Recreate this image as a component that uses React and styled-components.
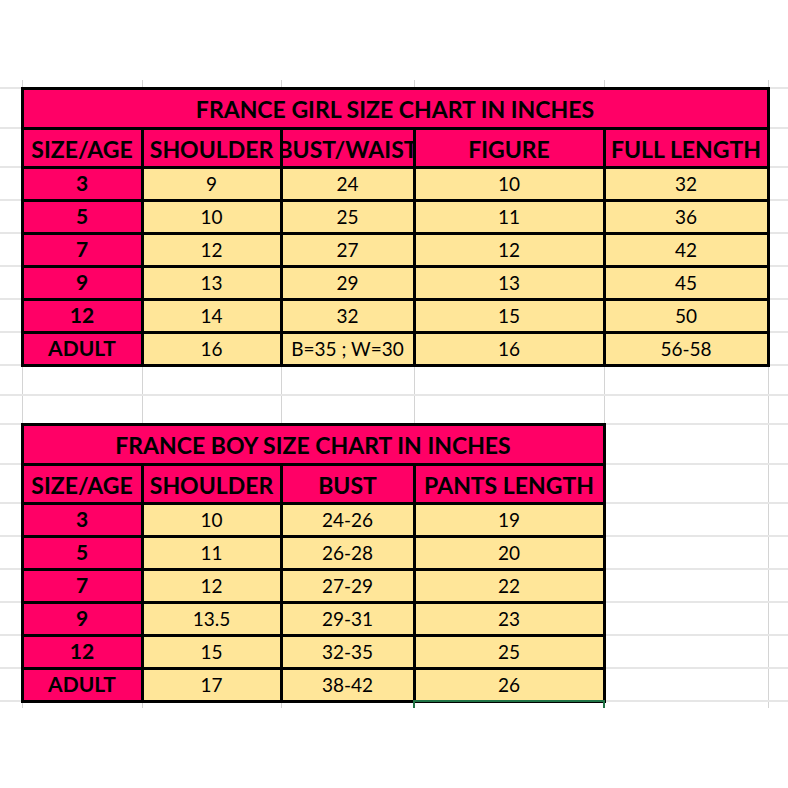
import React from 'react';
import styled, { createGlobalStyle } from 'styled-components';

const COLS = [22, 120, 139, 133, 190, 164, 20];

const girlRows = [
  ['3', '9', '24', '10', '32'],
  ['5', '10', '25', '11', '36'],
  ['7', '12', '27', '12', '42'],
  ['9', '13', '29', '13', '45'],
  ['12', '14', '32', '15', '50'],
  ['ADULT', '16', 'B=35 ; W=30', '16', '56-58'],
];

const boyRows = [
  ['3', '10', '24-26', '19'],
  ['5', '11', '26-28', '20'],
  ['7', '12', '27-29', '22'],
  ['9', '13.5', '29-31', '23'],
  ['12', '15', '32-35', '25'],
  ['ADULT', '17', '38-42', '26'],
];

const kinds = {
  title: { bg: '#ff0066', size: 23, weight: 700, shift: 3 },
  head: { bg: '#ff0066', size: 23, weight: 700, shift: 3 },
  label: { bg: '#ff0066', size: 21, weight: 700, shift: 0 },
  value: { bg: '#ffe699', size: 19, weight: 400, shift: 0 },
};

const Cell = ({ kind = 'value', span, children }) => (
  <TableCell $kind={kind} colSpan={span}>
    <Fit>{children}</Fit>
  </TableCell>
);

const Blanks = ({ count, last }) =>
  Array.from({ length: count }, (_, i) => <Blank key={'b' + i} $last={last} />);

const App = () => {
  return (
    <>
      <GlobalStyle />
      <Sheet>
        <colgroup>
          {COLS.map((w, i) => (
            <col key={i} style={{ width: w }} />
          ))}
        </colgroup>
        <tbody>
          <Row $h={8}>
            <Blanks count={7} />
          </Row>

          {/* girl chart */}
          <Row $h={40}>
            <Blank />
            <Cell kind="title" span={5}>FRANCE GIRL SIZE CHART IN INCHES</Cell>
            <Blank />
          </Row>
          <Row $h={39}>
            <Blank />
            <Cell kind="head">SIZE/AGE</Cell>
            <Cell kind="head">SHOULDER</Cell>
            <Cell kind="head">BUST/WAIST</Cell>
            <Cell kind="head">FIGURE</Cell>
            <Cell kind="head">FULL LENGTH</Cell>
            <Blank />
          </Row>
          {girlRows.map((r) => (
            <Row $h={33} key={'g' + r[0]}>
              <Blank />
              <Cell kind="label">{r[0]}</Cell>
              {r.slice(1).map((v, i) => (
                <Cell key={i}>{v}</Cell>
              ))}
              <Blank />
            </Row>
          ))}

          <Row $h={30}>
            <Blanks count={7} />
          </Row>
          <Row $h={29}>
            <Blanks count={7} />
          </Row>

          {/* boy chart */}
          <Row $h={40}>
            <Blank />
            <Cell kind="title" span={4}>FRANCE BOY SIZE CHART IN INCHES</Cell>
            <Blanks count={2} />
          </Row>
          <Row $h={39}>
            <Blank />
            <Cell kind="head">SIZE/AGE</Cell>
            <Cell kind="head">SHOULDER</Cell>
            <Cell kind="head">BUST</Cell>
            <Cell kind="head">PANTS LENGTH</Cell>
            <Blanks count={2} />
          </Row>
          {boyRows.map((r) => (
            <Row $h={33} key={'b' + r[0]}>
              <Blank />
              <Cell kind="label">{r[0]}</Cell>
              {r.slice(1).map((v, i) => (
                <Cell key={i}>{v}</Cell>
              ))}
              <Blanks count={2} />
            </Row>
          ))}

          <Row $h={7}>
            <Blanks count={4} last />
            <Blank $last>
              <Selection />
            </Blank>
            <Blanks count={2} last />
          </Row>
        </tbody>
      </Sheet>
    </>
  );
};

const GlobalStyle = createGlobalStyle`
  html, body {
    margin: 0;
    background: #fff;
  }
`;

const Sheet = styled.table`
  margin-top: 80px;
  width: 788px;
  table-layout: fixed;
  border-collapse: collapse;
  font-family: Lato, 'Liberation Sans', sans-serif;
  color: #000;

  td:last-child {
    border-right: none;
  }
`;

const Row = styled.tr`
  height: ${({ $h }) => $h}px;
`;

const Blank = styled.td`
  position: relative;
  padding: 0;
  border-right: 1px solid #d4d4d4;
  border-bottom: ${({ $last }) => ($last ? 'none' : '2px solid #e6e6e6')};
`;

const TableCell = styled.td`
  padding: ${({ $kind }) => kinds[$kind].shift}px 0 0;
  border: 3px solid #000;
  background: ${({ $kind }) => kinds[$kind].bg};
  font-size: ${({ $kind }) => kinds[$kind].size}px;
  font-weight: ${({ $kind }) => kinds[$kind].weight};
  line-height: 1.25;
`;

const Fit = styled.div`
  display: flex;
  justify-content: center;
  align-items: center;
  overflow: hidden;
  white-space: nowrap;
`;

const Selection = styled.div`
  position: absolute;
  top: -3px;
  left: -2px;
  right: -1px;
  bottom: 0;
  border: 2px solid #217346;
  border-bottom: none;
`;

export default App;
